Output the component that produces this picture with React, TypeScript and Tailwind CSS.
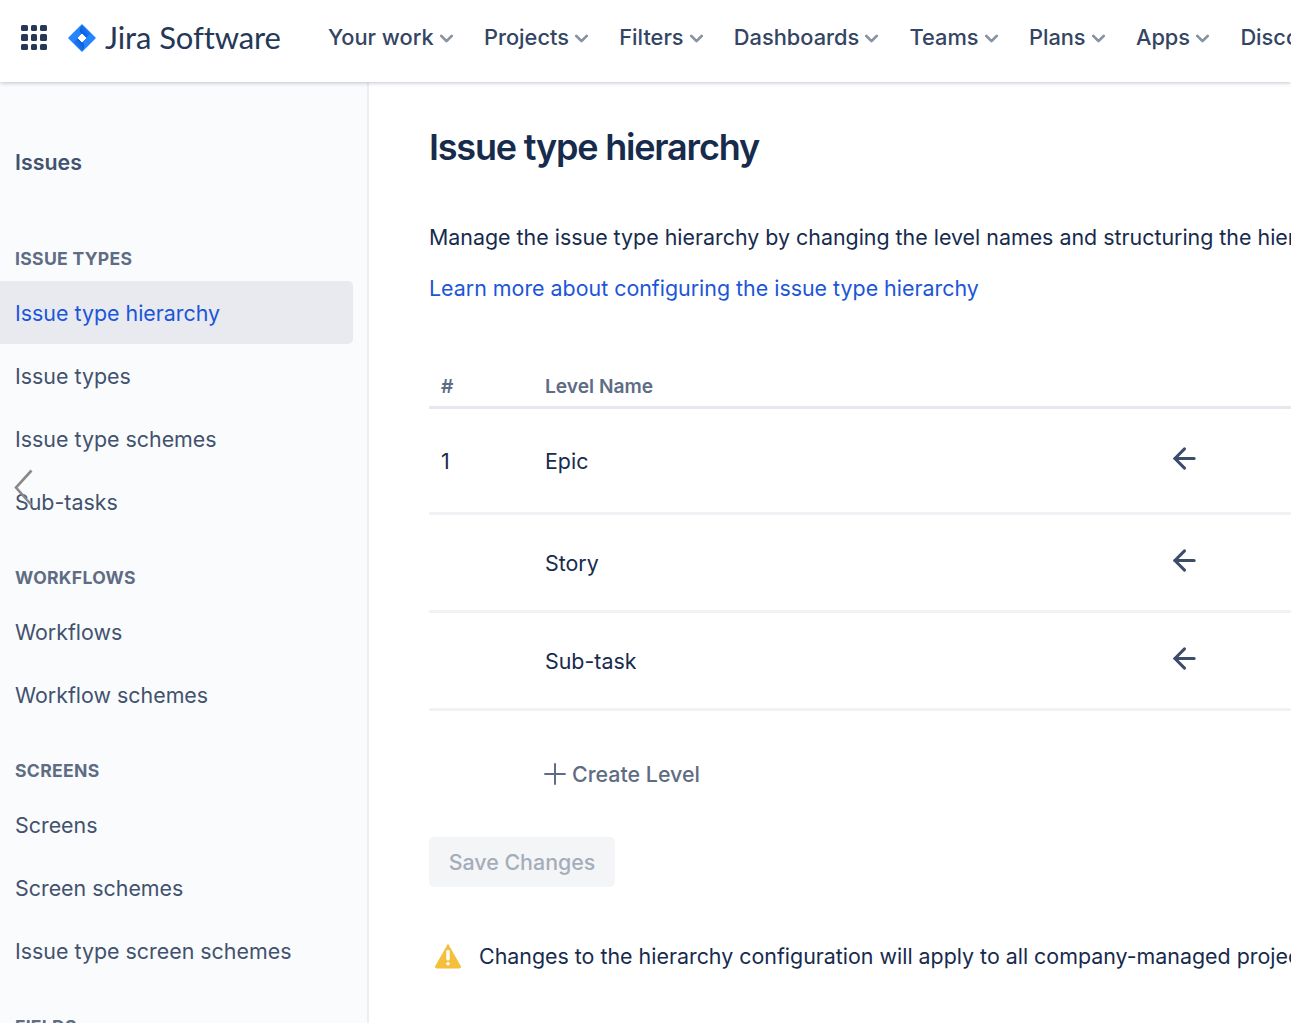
import { ArrowLeft, ChevronDown, Plus } from 'lucide-react';

const navItems = ['Your work', 'Projects', 'Filters', 'Dashboards', 'Teams', 'Plans', 'Apps'];

const AppGrid = () => (
  <div className="grid grid-cols-3 gap-[3px] w-[26px] shrink-0">
    {Array.from({ length: 9 }).map((_, i) => (
      <span key={i} className="w-[6.5px] h-[6.5px] rounded-[1.5px] bg-[#253858]" />
    ))}
  </div>
);

const Logo = () => (
  <svg width="28" height="28" viewBox="0 0 28 28" className="shrink-0">
    <defs>
      <linearGradient id="foldTop" x1="0.9" y1="0.1" x2="0.2" y2="0.7">
        <stop offset="0" stopColor="#2684ff" />
        <stop offset="1" stopColor="#0052cc" />
      </linearGradient>
      <linearGradient id="foldBottom" x1="0.1" y1="0.9" x2="0.8" y2="0.3">
        <stop offset="0" stopColor="#2684ff" />
        <stop offset="1" stopColor="#0052cc" />
      </linearGradient>
    </defs>
    <path d="M14 1 L27 14 L14 27 L1 14 Z" fill="#2684ff" stroke="#2684ff" strokeWidth="1.5" strokeLinejoin="round" />
    <path d="M14 1 C11 4.5 11 7.5 14 10.2 L17.8 14 L22.5 9.5 Z" fill="url(#foldTop)" opacity="0.75" />
    <path d="M14 27 C17 23.5 17 20.5 14 17.8 L10.2 14 L5.5 18.5 Z" fill="url(#foldBottom)" opacity="0.75" />
    <path d="M14 10 L18 14 L14 18 L10 14 Z" fill="#fff" stroke="#fff" strokeLinejoin="round" />
  </svg>
);

const NavItem = ({ label }: { label: string }) => (
  <div className="flex items-center gap-[2px] shrink-0 text-[21.8px] font-medium text-[#344563]">
    <span>{label}</span>
    <ChevronDown className="w-[21px] h-[21px] text-[#8993a4] mt-[2px]" strokeWidth={3.2} />
  </div>
);

const SideLink = ({ label, active }: { label: string; active?: boolean }) => (
  <div
    className={`h-[63px] flex items-center pl-[15px] pt-[1px] rounded-r-[5px] text-[21.4px] ${
      active ? 'bg-[#e8eaef] text-[#1c56d8]' : 'text-[#42526e]'
    }`}
  >
    {label}
  </div>
);

const SideHeading = ({ label }: { label: string }) => (
  <div className="h-[22px] flex items-center pl-[15px] text-[17.6px] font-bold tracking-[0.3px] text-[#5e6c84] mb-[11px]">
    {label}
  </div>
);

const Row = ({ num, name, h }: { num?: string; name: string; h: string }) => (
  <div className={`${h} flex items-center pt-[2px] border-b-[3px] border-[#f1f2f5] w-[1100px] text-[21.4px] text-[#172b4d]`}>
    <span className="w-[116px] pl-[12px]">{num}</span>
    <span className="w-[623px]">{name}</span>
    <ArrowLeft className="w-[33px] h-[33px] text-[#3d4c6b] -mt-[7px]" strokeWidth={2.2} />
  </div>
);

export default function App() {
  return (
    <div className="relative h-[1023px] overflow-hidden bg-white flex flex-col font-['Inter',sans-serif]">
      <header className="relative z-10 h-[82px] shrink-0 flex items-center pb-[7px] bg-white shadow-[0_1px_4px_rgba(9,30,66,0.25)] overflow-hidden">
        <div className="flex items-center pl-[21px] w-[328px] shrink-0">
          <AppGrid />
          <div className="ml-[21px]"><Logo /></div>
          <span className="ml-[9px] text-[31px] text-[#253858] font-['Lato',sans-serif] whitespace-nowrap tracking-[-0.1px]">Jira Software</span>
        </div>
        <nav className="flex items-center gap-[27.3px] whitespace-nowrap">
          {navItems.map((item) => (
            <NavItem key={item} label={item} />
          ))}
          <span className="text-[21.8px] font-medium text-[#344563]">Discover</span>
        </nav>
      </header>

      <div className="flex flex-1 min-h-0">
        <aside className="w-[369px] shrink-0 bg-[#fafbfd] border-r-[2px] border-[#eceef1] overflow-hidden pr-[14px]">
          <div className="pl-[15px] pt-[66px] text-[21.4px] font-semibold text-[#42526e] leading-[28px]">Issues</div>
          <div className="mt-[72px]"><SideHeading label="ISSUE TYPES" /></div>
          <SideLink label="Issue type hierarchy" active />
          <SideLink label="Issue types" />
          <SideLink label="Issue type schemes" />
          <SideLink label="Sub-tasks" />
          <div className="mt-[34px]"><SideHeading label="WORKFLOWS" /></div>
          <SideLink label="Workflows" />
          <SideLink label="Workflow schemes" />
          <div className="mt-[34px]"><SideHeading label="SCREENS" /></div>
          <SideLink label="Screens" />
          <SideLink label="Screen schemes" />
          <SideLink label="Issue type screen schemes" />
          <div className="mt-[34px]"><SideHeading label="FIELDS" /></div>
        </aside>

        <main className="flex-1 min-w-0 overflow-hidden pl-[60px] pt-[41px] whitespace-nowrap">
          <h1 className="text-[36px] leading-[48px] font-semibold tracking-[-1.2px] text-[#172b4d]">Issue type hierarchy</h1>
          <p className="mt-[51px] text-[21.4px] leading-[30px] text-[#172b4d]">
            Manage the issue type hierarchy by changing the level names and structuring the hierarchy.
          </p>
          <p className="mt-[21px] text-[21.4px] leading-[30px] text-[#1c56d8]">Learn more about configuring the issue type hierarchy</p>

          <div className="mt-[69px] h-[37px] flex items-start border-b-[3px] border-[#e6e8ee] w-[1100px] text-[19.2px] font-semibold text-[#5e6c84]">
            <span className="w-[116px] pl-[12px]">#</span>
            <span>Level Name</span>
          </div>
          <Row num="1" name="Epic" h="h-[106px]" />
          <Row name="Story" h="h-[98px]" />
          <Row name="Sub-task" h="h-[98px]" />

          <div className="mt-[46px] ml-[109px] flex items-center text-[21.4px] font-medium text-[#5e6c84]">
            <Plus className="w-[34px] h-[34px]" strokeWidth={1.4} />
            <span>Create Level</span>
          </div>
          <button
            type="button"
            className="mt-[46px] block w-[186px] h-[50px] rounded-[5px] bg-[#f4f5f7] text-[21.4px] font-medium text-[#a5adba]"
          >
            Save Changes
          </button>
          <div className="mt-[53px] flex items-center text-[21.4px] text-[#172b4d]">
            <svg width="28" height="26" viewBox="0 0 28 26" className="ml-[5px] shrink-0">
              <path d="M14 1.5 L26.5 23.5 Q27 25 25 25 L3 25 Q1 25 1.5 23.5 Z" fill="#f6bf3a" stroke="#f6bf3a" strokeLinejoin="round" />
              <rect x="12.3" y="7" width="3.4" height="10.5" rx="1.4" fill="#fff" />
              <circle cx="14" cy="20.7" r="1.8" fill="#fff" />
            </svg>
            <span className="ml-[17px]">Changes to the hierarchy configuration will apply to all company-managed projects.</span>
          </div>
        </main>
      </div>

      <svg width="20" height="38" viewBox="0 0 20 38" className="absolute left-[14px] top-[469px] z-20">
        <path d="M17.5 1.5 L2 18.5 L17.5 36" fill="none" stroke="#8a8a8a" strokeWidth="2.6" />
      </svg>
    </div>
  );
}
